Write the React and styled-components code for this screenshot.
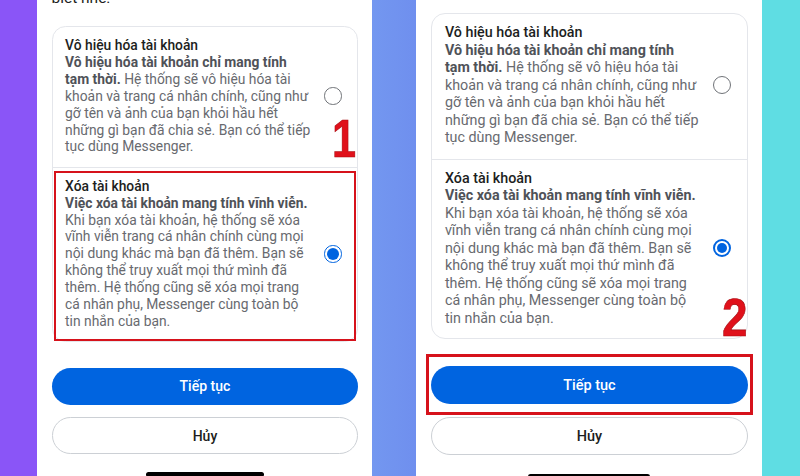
import React from "react";
import styled, { createGlobalStyle, css } from "styled-components";

const GlobalStyle = createGlobalStyle`
  html, body {
    margin: 0;
    padding: 0;
  }
  body {
    font-family: Roboto, "Noto Sans", sans-serif;
    background: #fff;
  }
`;

const Page = styled.div`
  display: flex;
  width: 800px;
  height: 476px;
  overflow: hidden;
`;

const Strip = styled.div`
  flex: none;
  width: ${(p) => p.$w}px;
  background: ${(p) => p.$bg};
`;

// one screenshot of the phone, zoom handles the slightly smaller left crop
const Phone = styled.div`
  flex: none;
  box-sizing: border-box;
  width: 346px;
  height: ${(p) => 476 / p.$zoom}px;
  zoom: ${(p) => p.$zoom};
  padding: ${(p) => p.$top}px 14px 0 15px;
  display: flex;
  flex-direction: column;
  background: #fff;
  overflow: hidden;
`;

const Intro = styled.div`
  margin: -11px 0 18px;
  font-size: 16px;
  line-height: 20px;
  color: #1c1e21;
`;

const Card = styled.div`
  position: relative;
  border: 1px solid #e4e6eb;
  border-radius: 14px;
`;

const Option = styled.div`
  position: relative;
  display: flex;
  align-items: center;
  padding: 10px 16px ${(p) => p.$pb}px 13px;

  & + & {
    border-top: 1px solid #e4e6eb;
  }

  ${(p) =>
    p.$marked &&
    css`
      &::after {
        content: "";
        position: absolute;
        inset: 3px 1px 0 2px;
        border: 3px solid #d6121b;
        pointer-events: none;
      }
    `}
`;

const Text = styled.div`
  flex: 1;
  font-size: 14.3px;
  line-height: 17.5px;
  color: #686a6f;
  white-space: nowrap;
`;

const Title = styled.div`
  font-weight: 500;
  color: #1c1e21;
`;

const Strong = styled.span`
  font-weight: 700;
  color: #4f5258;
`;

const Radio = styled.span`
  flex: none;
  box-sizing: border-box;
  width: 18px;
  height: 18px;
  border-radius: 50%;
  border: ${(p) => (p.$on ? "2px solid #0064e0" : "1.5px solid #707378")};
  padding: 2px;
  background-clip: content-box;
  background-color: ${(p) => (p.$on ? "#0064e0" : "transparent")};
`;

const Step = styled.span`
  position: absolute;
  left: ${(p) => p.$x}px;
  top: ${(p) => p.$y}px;
  font-family: "Liberation Sans", Arial, sans-serif;
  font-weight: 700;
  font-size: ${(p) => p.$size}px;
  line-height: 1;
  color: #e0111b;
  transform: scaleX(${(p) => p.$sx});
  transform-origin: left top;
  -webkit-text-stroke: 0.6px #a30d12;
`;

const ButtonWrap = styled.div`
  position: relative;
  margin-top: ${(p) => p.$mt}px;

  ${(p) =>
    p.$marked &&
    css`
      &::after {
        content: "";
        position: absolute;
        inset: -12px -5px -11px -5px;
        border: 3px solid #d6121b;
        pointer-events: none;
      }
    `}
`;

const Button = styled.button`
  display: block;
  box-sizing: border-box;
  width: 100%;
  height: 38px;
  border-radius: 19px;
  font-family: Roboto, "Noto Sans", sans-serif;
  font-size: 14.5px;
  font-weight: 500;
  ${(p) =>
    p.$primary
      ? css`
          background: #0064e0;
          color: #fff;
          border: none;
        `
      : css`
          background: #fff;
          color: #1c1e21;
          border: 1px solid #ccd0d5;
        `}
`;

const HomeBar = styled.div`
  flex: none;
  align-self: center;
  width: 122px;
  height: 5px;
  margin-top: 19px;
  border-radius: 3px;
  background: #000;
`;

const Screen = ({ zoom, top, intro, markOption, markButton, step }) => (
  <Phone $zoom={zoom} $top={top}>
    {intro && <Intro>biết nhé.</Intro>}
    <Card>
      <Option $pb={12}>
        <Text>
          <Title>Vô hiệu hóa tài khoản</Title>
          <Strong>Vô hiệu hóa tài khoản chỉ mang tính</Strong>
          <br />
          <Strong>tạm thời.</Strong> Hệ thống sẽ vô hiệu hóa tài
          <br />
          khoản và trang cá nhân chính, cũng như
          <br />
          gỡ tên và ảnh của bạn khỏi hầu hết
          <br />
          những gì bạn đã chia sẻ. Bạn có thể tiếp
          <br />
          tục dùng Messenger.
        </Text>
        <Radio />
      </Option>
      <Option $pb={11} $marked={markOption}>
        <Text>
          <Title>Xóa tài khoản</Title>
          <Strong>Việc xóa tài khoản mang tính vĩnh viễn.</Strong>
          <br />
          Khi bạn xóa tài khoản, hệ thống sẽ xóa
          <br />
          vĩnh viễn trang cá nhân chính cùng mọi
          <br />
          nội dung khác mà bạn đã thêm. Bạn sẽ
          <br />
          không thể truy xuất mọi thứ mình đã
          <br />
          thêm. Hệ thống cũng sẽ xóa mọi trang
          <br />
          cá nhân phụ, Messenger cùng toàn bộ
          <br />
          tin nhắn của bạn.
        </Text>
        <Radio $on />
      </Option>
      <Step $x={step.x} $y={step.y} $size={step.size} $sx={step.sx}>
        {step.label}
      </Step>
    </Card>
    <ButtonWrap $mt={27} $marked={markButton}>
      <Button $primary>Tiếp tục</Button>
    </ButtonWrap>
    <ButtonWrap $mt={13}>
      <Button>Hủy</Button>
    </ButtonWrap>
    <HomeBar />
  </Phone>
);

const App = () => (
  <>
    <GlobalStyle />
    <Page>
      <Strip $w={37} $bg="#8a55f7" />
      <Screen
        zoom={0.968}
        top={0}
        intro
        markOption
        step={{ label: "1", x: 289, y: 87, size: 56, sx: 0.8 }}
      />
      <Strip $w={44} $bg="linear-gradient(90deg, #7397f0, #6f8fee)" />
      <Screen
        zoom={1}
        top={13}
        markButton
        step={{ label: "2", x: 290, y: 276, size: 54, sx: 0.85 }}
      />
      <Strip $w={38} $bg="#5fdde3" />
    </Page>
  </>
);

export default App;
